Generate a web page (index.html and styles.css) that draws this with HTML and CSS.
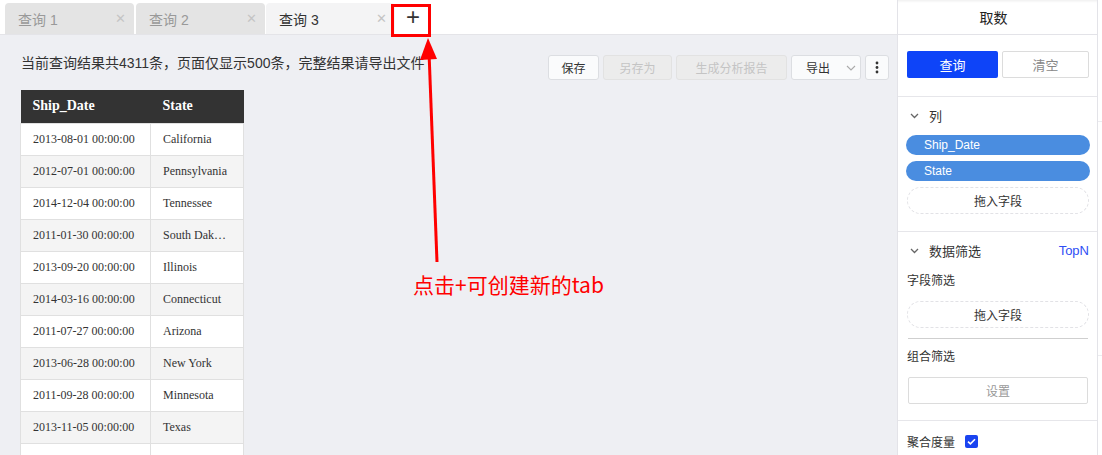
FILE: index.html
```html
<!DOCTYPE html>
<html lang="zh">
<head>
<meta charset="utf-8">
<link rel="stylesheet" href="styles.css">
</head>
<body>
<div class="app">
  <div class="main">
    <div class="tabbar">
      <div class="tab"><span>查询 1</span><span class="x">✕</span></div>
      <div class="tab"><span>查询 2</span><span class="x">✕</span></div>
      <div class="tab active"><span>查询 3</span><span class="x">✕</span></div>
      <div class="add">+</div>
    </div>
    <div class="content">
      <div class="toolbar">
        <div class="info">当前查询结果共4311条，页面仅显示500条，完整结果请导出文件</div>
        <div class="btns">
          <div class="btn w51">保存</div>
          <div class="btn dis w69">另存为</div>
          <div class="btn dis w111">生成分析报告</div>
          <div class="btn w70 exp"><span>导出</span><svg width="10" height="6" viewBox="0 0 10 6"><path d="M1 1l4 4 4-4" fill="none" stroke="#aaa" stroke-width="1.1"/></svg></div>
          <div class="btn w24"><svg width="4" height="13" viewBox="0 0 4 13"><circle cx="2" cy="2" r="1.4" fill="#333"/><circle cx="2" cy="6.5" r="1.4" fill="#333"/><circle cx="2" cy="11" r="1.4" fill="#333"/></svg></div>
        </div>
      </div>
      <table class="grid">
        <thead><tr><th class="c1">Ship_Date</th><th class="c2">State</th></tr></thead>
        <tbody>
          <tr><td>2013-08-01 00:00:00</td><td>California</td></tr>
          <tr><td>2012-07-01 00:00:00</td><td>Pennsylvania</td></tr>
          <tr><td>2014-12-04 00:00:00</td><td>Tennessee</td></tr>
          <tr><td>2011-01-30 00:00:00</td><td><div class="ell">South Dakota</div></td></tr>
          <tr><td>2013-09-20 00:00:00</td><td>Illinois</td></tr>
          <tr><td>2014-03-16 00:00:00</td><td>Connecticut</td></tr>
          <tr><td>2011-07-27 00:00:00</td><td>Arizona</td></tr>
          <tr><td>2013-06-28 00:00:00</td><td>New York</td></tr>
          <tr><td>2011-09-28 00:00:00</td><td>Minnesota</td></tr>
          <tr><td>2013-11-05 00:00:00</td><td>Texas</td></tr>
          <tr><td class="blank"></td><td class="blank"></td></tr>
        </tbody>
      </table>
    </div>
  </div>
  <div class="side">
    <div class="side-head">取数</div>
    <div class="sec act">
      <div class="primary">查询</div>
      <div class="ghost">清空</div>
    </div>
    <div class="sec cols">
      <div class="sh"><svg class="chev" width="9" height="6" viewBox="0 0 9 6"><path d="M1 1l3.5 3.5L8 1" fill="none" stroke="#666" stroke-width="1.3"/></svg><span>列</span></div>
      <div class="pill">Ship_Date</div>
      <div class="pill">State</div>
      <div class="drop">拖入字段</div>
    </div>
    <div class="sec filt">
      <div class="sh"><svg class="chev" width="9" height="6" viewBox="0 0 9 6"><path d="M1 1l3.5 3.5L8 1" fill="none" stroke="#666" stroke-width="1.3"/></svg><span>数据筛选</span><span class="topn">TopN</span></div>
      <div class="lbl">字段筛选</div>
      <div class="drop">拖入字段</div>
      <div class="hr"></div>
      <div class="lbl">组合筛选</div>
      <div class="setbtn">设置</div>
    </div>
    <div class="sec agg">
      <span>聚合度量</span>
      <span class="cb"><svg width="13" height="13" viewBox="0 0 13 13"><path d="M3 6.6l2.4 2.3L10 4.2" fill="none" stroke="#fff" stroke-width="1.6"/></svg></span>
    </div>
  </div>
  <div class="strip">
    <div class="s1"></div>
    <div class="s2"></div>
  </div>
</div>
<svg class="anno" width="1102" height="455" viewBox="0 0 1102 455">
  <rect x="392.5" y="5.5" width="37" height="30" fill="none" stroke="#ff0000" stroke-width="3"/>
  <line x1="437" y1="262" x2="429" y2="52" stroke="#ff0000" stroke-width="3"/>
  <polygon points="428,38 420,60 437,59" fill="#ff0000"/>
</svg>
<div class="anno-text">点击+可创建新的tab</div>
</body>
</html>
```
FILE: styles.css
```css
* { box-sizing: border-box; }
html, body { margin: 0; padding: 0; }
body {
  width: 1102px; height: 455px; overflow: hidden; position: relative;
  font-family: "Liberation Sans", "Noto Sans CJK SC", sans-serif;
  color: #333; background: #eeeff3;
}
.app { display: flex; height: 455px; }
.main { flex: 1 1 0; display: flex; flex-direction: column; min-width: 0; }
.tabbar {
  height: 35px; background: #fff; border-bottom: 1px solid #e4e4e8;
  display: flex; align-items: flex-end; padding-left: 5px; gap: 2px; flex: none;
}
.tab {
  width: 129px; height: 31px; background: #e4e4e4; border-radius: 4px 4px 0 0;
  display: flex; align-items: center; justify-content: space-between;
  padding: 0 8px 0 13px; font-size: 14px; color: #999; flex: none;
}
.tab .x { font-size: 13px; color: #c4c4c4; }
.tab.active { background: #f4f4f5; color: #333; margin-left: -1px; }
.add { width: 32px; height: 31px; display: flex; align-items: center; justify-content: center; font-size: 24px; color: #333; font-weight: 300; line-height: 1; padding-bottom: 3px; }
.content { padding: 18px 8px 0 20px; flex: 1; overflow: hidden; }
.toolbar { display: flex; justify-content: space-between; align-items: flex-start; }
.info { font-size: 14px; line-height: 20px; margin-left: 1px; color: #333; white-space: nowrap; }
.btns { display: flex; gap: 4px; margin-top: 2px; flex: none; }
.btn {
  height: 25px; border: 1px solid #dcdee2; border-radius: 3px; background: #fafbfc;
  font-size: 12px; display: flex; align-items: center; justify-content: center; color: #333; flex: none;
}
.btn.dis { background: #ececec; color: #c4c4c4; border-color: #e2e2e2; }
.w51 { width: 51px; } .w69 { width: 69px; } .w111 { width: 111px; } .w70 { width: 70px; } .w24 { width: 24px; }
.exp { justify-content: flex-start; padding-left: 14px; gap: 16px; }
.grid { border-collapse: collapse; margin-top: 10px; font-family: "Liberation Serif", serif; table-layout: fixed; width: 223px; }
.grid th { background: #333; color: #fff; font-size: 14px; font-weight: bold; text-align: left; height: 33px; padding: 0 12px; }
.grid th.c1 { width: 130px; } .grid th.c2 { width: 93px; }
.grid td { font-size: 12px; color: #333; height: 32px; padding: 0 12px; border: 1px solid #e0e0e0; background: #fff; white-space: nowrap; overflow: hidden; }
.grid tbody tr:nth-child(even) td { background: #f4f4f4; }
.ell { overflow: hidden; text-overflow: ellipsis; width: 64px; white-space: nowrap; }
.side { flex: none; width: 201px; background: #fff; border-left: 1px solid #e3e3e8; border-right: 1px solid #e3e3e8; display: flex; flex-direction: column; font-size: 12px; }
.side-head { flex: none; height: 35px; border-bottom: 1px solid #e3e3e8; display: flex; align-items: center; justify-content: center; font-size: 14px; color: #222; padding-right: 8px; box-shadow: inset 0 3px 3px -2px rgba(0,0,0,0.08); }
.sec { flex: none; border-bottom: 1px solid #e6e6ea; padding: 0 8px 0 9px; }
.act { display: flex; gap: 4px; padding-top: 16px; padding-bottom: 17px; height: 62px; }
.primary { width: 91px; height: 27px; background: #0e44f8; color: #fff; border-radius: 2px; display: flex; align-items: center; justify-content: center; font-size: 13px; }
.ghost { width: 87px; height: 27px; border: 1px solid #dcdcdc; border-radius: 2px; display: flex; align-items: center; justify-content: center; color: #888; font-size: 13px; }
.sh { height: 38px; display: flex; align-items: center; font-size: 13px; padding-left: 3px; padding-bottom: 1px; }
.chev { margin-right: 10px; }
.topn { margin-left: auto; color: #2e4ef5; font-size: 13px; }
.cols { height: 135px; }
.pill { height: 20px; border-radius: 10px; background: #4a8de0; color: #fff; font-size: 12px; display: flex; align-items: center; padding-left: 18px; margin: 0 -1px 6px -1px; }
.drop { height: 27px; border: 1px dashed #e2e2e6; border-radius: 14px; display: flex; align-items: center; justify-content: center; font-size: 12px; color: #333; }
.filt { height: 189px; }
.filt .sh { height: 38px; }
.lbl { height: 20px; line-height: 20px; font-size: 12px; margin-top: 1px; margin-bottom: 10px; }
.hr { height: 1px; background: #cfcfcf; margin: 10px 1px 8px; }
.setbtn { height: 27px; border: 1px solid #dcdcdc; border-radius: 2px; display: flex; align-items: center; justify-content: center; color: #999; font-size: 12px; margin: 0 1px 0 1px; }
.agg { border-bottom: none; display: flex; align-items: center; height: 40px; padding-top: 0; font-size: 12px; }
.cb { width: 13px; height: 13px; background: #1a44f0; border-radius: 2px; margin-left: 10px; display: flex; }
.strip { flex: none; width: 4px; background: #fff; display: flex; flex-direction: column; }
.s1 { height: 122px; border-bottom: 1px solid #ececf0; }
.s2 { height: 234px; border-bottom: 1px solid #ececf0; }
.anno { position: absolute; left: 0; top: 0; pointer-events: none; }
.anno-text { position: absolute; left: 413px; top: 270px; font-size: 21px; line-height: 28px; color: #ff0000; font-family: "Noto Sans CJK SC", sans-serif; }
```
